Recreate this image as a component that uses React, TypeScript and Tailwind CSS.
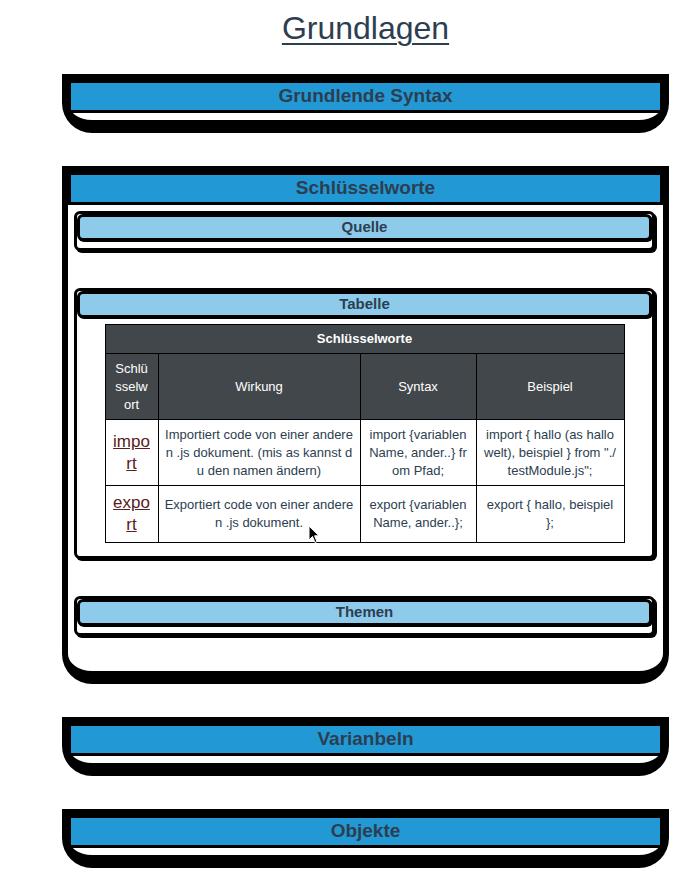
import React from "react";

const font = { fontFamily: '"Liberation Sans", Arial, sans-serif' };

function Collapsed({ title }: { title: string }) {
  return (
    <div className="w-[607px] border-[6px] border-b-[13px] border-black rounded-b-[30px] bg-white">
      <div className="h-[33px] border-[3px] border-black bg-[#2298d4] flex items-center justify-center text-[19px] font-bold text-[#2c3e50]">
        {title}
      </div>
      <div className="h-[7px]" />
    </div>
  );
}

function SubHeader({ title }: { title: string }) {
  return (
    <div className="h-[27px] border-[3px] border-black rounded-[6px] bg-[#8ecbea] shadow-[1px_1px_0_#000] flex items-center justify-center text-[15px] font-bold text-[#2c3e50]">
      {title}
    </div>
  );
}

function SubBox({ title, children }: { title: string; children?: React.ReactNode }) {
  return (
    <div className="border-[3px] border-black rounded-[6px] bg-white shadow-[2px_2px_0_#000]">
      <SubHeader title={title} />
      {children}
      <div className="h-[7px]" />
    </div>
  );
}

const td = "border border-black px-0 py-0 align-middle text-center whitespace-nowrap";

export default function App() {
  return (
    <div className="bg-white min-h-[888px] relative" style={font}>
      <div className="ml-[62px] w-[607px] flex flex-col">
        <div className="pt-[10px] h-[46px] text-center">
          <span className="text-[32px] leading-[36px] underline underline-offset-[4px] decoration-[2px] text-[#2c3e50]">
            Grundlagen
          </span>
        </div>
        <div className="mt-[28px] flex flex-col gap-[33px]">
          <Collapsed title="Grundlende Syntax" />

          <div className="w-[607px] border-[6px] border-b-[13px] border-black rounded-b-[30px] bg-white">
            <div className="h-[33px] border-[3px] border-black bg-[#2298d4] flex items-center justify-center text-[19px] font-bold text-[#2c3e50]">
              Schlüsselworte
            </div>
            <div className="pt-[6px] pb-[35px] pl-[6px] pr-[8px] flex flex-col gap-[37px]">
              <SubBox title="Quelle" />
              <SubBox title="Tabelle">
                <div className="pt-[6px] pb-[6px]">
                  <table className="w-[519px] mx-auto table-fixed border-collapse border border-black text-[13px] leading-[18px] text-[#2c3e50]">
                    <colgroup>
                      <col className="w-[53px]" />
                      <col className="w-[202px]" />
                      <col className="w-[116px]" />
                      <col className="w-[148px]" />
                    </colgroup>
                    <tbody>
                      <tr className="h-[29px] bg-[#42474b] text-white">
                        <td colSpan={4} className={td + " font-bold"}>
                          Schlüsselworte
                        </td>
                      </tr>
                      <tr className="h-[66px] bg-[#42474b] text-white">
                        <td className={td}>
                          Schlü<br />sselw<br />ort
                        </td>
                        <td className={td}>Wirkung</td>
                        <td className={td}>Syntax</td>
                        <td className={td}>Beispiel</td>
                      </tr>
                      <tr className="h-[66px]">
                        <td className={td}>
                          <a className="text-[17px] leading-[22px] underline text-[#5a2020]">
                            impo<br />rt
                          </a>
                        </td>
                        <td className={td}>
                          Importiert code von einer andere<br />n .js dokument. (mis as kannst d<br />u den namen ändern)
                        </td>
                        <td className={td}>
                          import {"{"}variablen<br />Name, ander..{"}"} fr<br />om Pfad;
                        </td>
                        <td className={td}>
                          import {"{"} hallo (as hallo<br />welt), beispiel {"}"} from "./<br />testModule.js";
                        </td>
                      </tr>
                      <tr className="h-[57px]">
                        <td className={td}>
                          <a className="text-[17px] leading-[22px] underline text-[#5a2020]">
                            expo<br />rt
                          </a>
                        </td>
                        <td className={td}>
                          Exportiert code von einer andere<br />n .js dokument.
                        </td>
                        <td className={td}>
                          export {"{"}variablen<br />Name, ander..{"}"};
                        </td>
                        <td className={td}>
                          export {"{"} hallo, beispiel<br />{"}"};
                        </td>
                      </tr>
                    </tbody>
                  </table>
                </div>
              </SubBox>
              <SubBox title="Themen" />
            </div>
          </div>

          <Collapsed title="Varianbeln" />
          <Collapsed title="Objekte" />
        </div>
      </div>
      <svg className="absolute left-[308px] top-[525px]" width="12" height="19" viewBox="0 0 12 19">
        <path d="M1 1 L1 15 L4.5 11.5 L7 17.5 L9 16.6 L6.6 10.8 L11 10.8 Z" fill="#000" stroke="#fff" strokeWidth="1" />
      </svg>
    </div>
  );
}
